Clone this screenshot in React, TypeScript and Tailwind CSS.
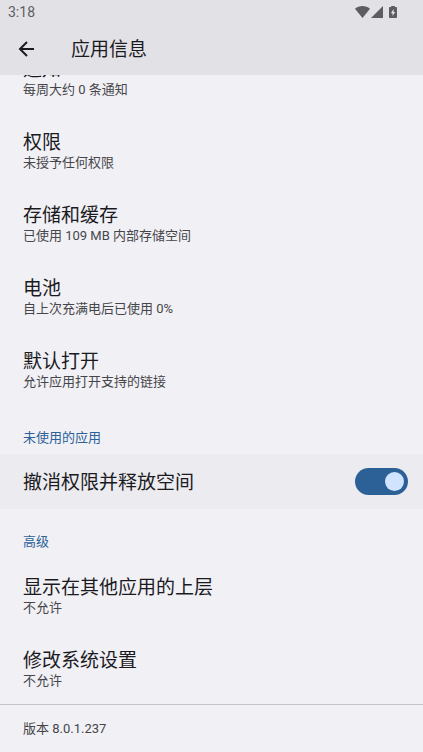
import { useState } from 'react';

type Preference = {
  title: string;
  summary: string;
};

const appPreferences: Preference[] = [
  { title: '通知', summary: '每周大约 0 条通知' },
  { title: '权限', summary: '未授予任何权限' },
  { title: '存储和缓存', summary: '已使用 109 MB 内部存储空间' },
  { title: '电池', summary: '自上次充满电后已使用 0%' },
  { title: '默认打开', summary: '允许应用打开支持的链接' },
];

const advancedPreferences: Preference[] = [
  { title: '显示在其他应用的上层', summary: '不允许' },
  { title: '修改系统设置', summary: '不允许' },
];

function StatusBar() {
  return (
    <div className="flex h-6 items-center justify-between pl-2 pr-[26px] text-[#5d5d61]">
      <span className="text-sm leading-6">3:18</span>
      <div className="flex items-center">
        <svg className="h-3 w-[15px]" viewBox="0 0 15 12" fill="currentColor" aria-hidden="true">
          <path d="M7.5 12 0 2.8C2.1 1 4.7 0 7.5 0s5.4 1 7.5 2.8z" />
        </svg>
        <svg className="ml-px h-3 w-3" viewBox="0 0 12 12" fill="currentColor" aria-hidden="true">
          <path d="M0 12 12 0v12z" />
        </svg>
        <svg className="ml-1.5 h-3 w-2" viewBox="0 0 8 12" fill="currentColor" aria-hidden="true">
          <path
            fillRule="evenodd"
            d="M2.2 0h3.6v1H7.2c.5 0 .8.3.8.8v9.4c0 .5-.3.8-.8.8H.8c-.5 0-.8-.3-.8-.8V1.8c0-.5.3-.8.8-.8h1.400zM4.600 3 1.900 7.200h1.600V10L6.200 5.900H4.600z"
          />
        </svg>
      </div>
    </div>
  );
}

function PreferenceItem({ title, summary }: Preference) {
  return (
    <li>
      <button type="button" className="block w-full px-[23px] pt-[18px] pb-[15px] text-left">
        <span className="block text-[19px] leading-6 text-[#1b1b1f]">{title}</span>
        <span className="block text-[13px] leading-4 text-[#46464a]">{summary}</span>
      </button>
    </li>
  );
}

function CategoryTitle({ children }: { children: string }) {
  return (
    <h2 className="px-[23px] pt-[25px] pb-2 text-[13px] leading-4 text-[#2c6197]">{children}</h2>
  );
}

export default function App() {
  const [revokeUnused, setRevokeUnused] = useState(true);

  return (
    <div className="min-h-screen overflow-hidden bg-[#f1f0f5] font-['Roboto','Noto_Sans_CJK_SC',sans-serif]">
      <header className="sticky top-0 z-10 bg-[#e2e1e6]">
        <StatusBar />
        <div className="flex h-[51px] items-center gap-[35px] pb-[2px] pl-[18px]">
          <button type="button" aria-label="返回" className="text-[#1b1b1f]">
            <svg className="size-[18px]" viewBox="0 0 18 18" fill="none" stroke="currentColor" strokeWidth="2" aria-hidden="true">
              <path d="M16 9H2.500M9 2 2 9l7 7" />
            </svg>
          </button>
          <h1 className="pt-[2px] text-[19px] leading-6 text-[#1b1b1f]">应用信息</h1>
        </div>
      </header>

      {/* The list is scrolled a little way under the app bar */}
      <main className="-mt-[35px]">
        <ul>
          {appPreferences.map((item) => (
            <PreferenceItem key={item.title} {...item} />
          ))}
        </ul>

        <CategoryTitle>未使用的应用</CategoryTitle>
        <label className="flex h-[55px] items-center justify-between bg-[#ecebf0] pl-[23px] pr-[15px]">
          <span className="pt-[3px] text-[19px] leading-6 text-[#1b1b1f]">撤消权限并释放空间</span>
          <input
            type="checkbox"
            role="switch"
            checked={revokeUnused}
            onChange={(e) => setRevokeUnused(e.target.checked)}
            className="flex h-[27px] w-[53px] appearance-none items-center rounded-full bg-[#8e8e93] px-1 before:size-[19px] before:rounded-full before:bg-[#d1e4ff] before:content-[''] checked:justify-end checked:bg-[#2c6197]"
          />
        </label>

        <CategoryTitle>高级</CategoryTitle>
        <ul>
          {advancedPreferences.map((item) => (
            <PreferenceItem key={item.title} {...item} />
          ))}
        </ul>

        <footer className="border-t border-[#c4c4ca] px-[23px] pt-4 pb-[15px] text-[13px] leading-4 text-[#46464a]">
          版本 8.0.1.237
        </footer>
      </main>
    </div>
  );
}
